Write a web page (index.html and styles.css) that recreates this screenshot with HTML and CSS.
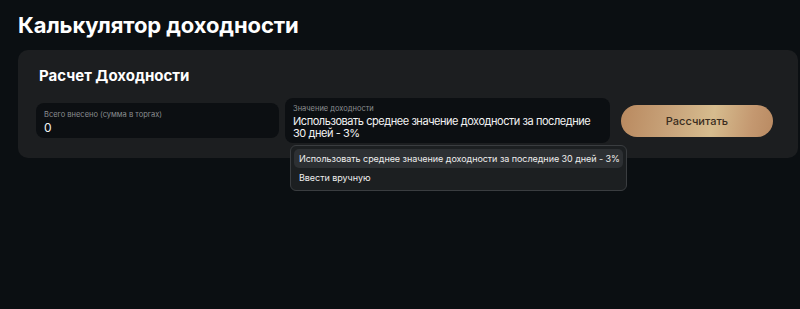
FILE: index.html
```html
<!DOCTYPE html>
<html lang="ru">
<head>
    <meta charset="UTF-8">
    <meta name="viewport" content="width=device-width, initial-scale=1.0">
    <title>Калькулятор доходности</title>
    <link rel="stylesheet" href="styles.css">
</head>
<body>

    <h1 class="page-title">Калькулятор доходности</h1>

    <div class="card">
        <h2 class="card-title">Расчет Доходности</h2>

        <div class="form-row">
            <div class="field field-deposit">
                <label class="field-label">Всего внесено (сумма в торгах)</label>
                <div class="field-value">0</div>
            </div>

            <div class="field field-yield">
                <label class="field-label">Значение доходности</label>
                <div class="field-value">Использовать среднее значение доходности за последние 30 дней - 3%</div>

                <ul class="dropdown">
                    <li class="dropdown-item active">Использовать среднее значение доходности за последние 30 дней - 3%</li>
                    <li class="dropdown-item">Ввести вручную</li>
                </ul>
            </div>

            <button class="calc-btn">Рассчитать</button>
        </div>
    </div>

</body>
</html>
```

FILE: styles.css
```css
* {
    box-sizing: border-box;
    margin: 0;
    padding: 0;
}

body {
    font-family: Inter, "Noto Sans", sans-serif;
    background-color: #0b0f12;
    color: #ffffff;
    padding: 12px 2px 0 18px;
    height: 309px;
    overflow: hidden;
}

.page-title {
    font-size: 22px;
    font-weight: 700;
    line-height: 26px;
    letter-spacing: -0.1px;
}

.card {
    margin-top: 12px;
    background-color: #1c1e20;
    border-radius: 10px;
    padding: 16px 25px 15px 18px;
}

.card-title {
    font-size: 15px;
    font-weight: 700;
    line-height: 20px;
    margin-left: 3px;
}

.form-row {
    display: flex;
    align-items: center;
    margin-top: 12px;
}

.field {
    background-color: #0c0f12;
    border-radius: 8px;
    position: relative;
}

.field-deposit {
    width: 243px;
    padding: 7px 8px 4px;
}

.field-yield {
    width: 325px;
    margin-left: 6px;
    padding: 6px 8px 4px;
}

.field-label {
    display: block;
    font-size: 7.5px;
    line-height: 10px;
    color: #8b8e91;
}

.field-value {
    font-size: 11px;
    line-height: 12px;
    letter-spacing: -0.45px;
    color: #f2f2f2;
    margin-top: 1px;
}

.field-deposit .field-value {
    font-size: 12px;
    line-height: 13px;
}

.dropdown {
    list-style: none;
    position: absolute;
    left: 5px;
    top: 47px;
    width: 337px;
    background-color: #1c1f21;
    border: 1px solid #3a3d40;
    border-radius: 6px;
    padding: 3px;
    z-index: 5;
}

.dropdown-item {
    font-size: 9px;
    line-height: 19px;
    letter-spacing: -0.05px;
    padding: 0 5px;
    border-radius: 5px;
    color: #eeeeee;
    white-space: nowrap;
}

.dropdown-item.active {
    background-color: #2d3033;
}

.calc-btn {
    margin-left: 11px;
    width: 152px;
    height: 32px;
    border: none;
    border-radius: 16px;
    font-family: Inter, "Noto Sans", sans-serif;
    font-size: 11px;
    font-weight: 500;
    color: #3a2d20;
    background: linear-gradient(100deg, #b9895f 0%, #c9a57c 35%, #d6bc8e 60%, #c49870 85%, #b98a62 100%);
    cursor: pointer;
}
```
